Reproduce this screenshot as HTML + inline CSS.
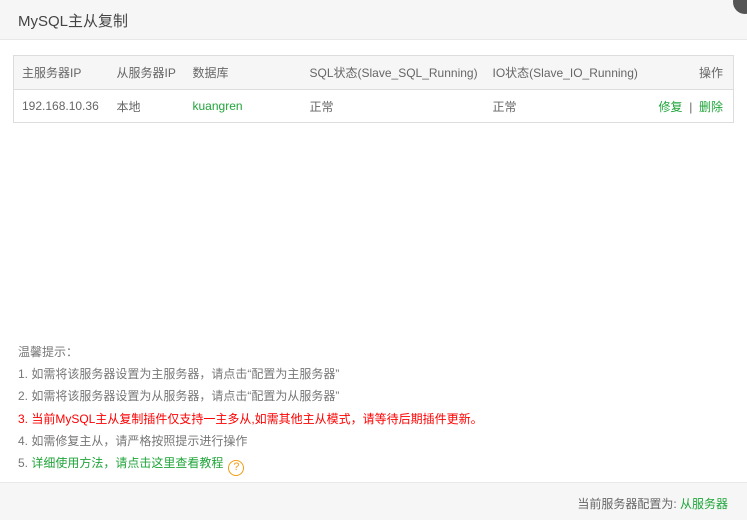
<!DOCTYPE html>
<html><head><meta charset="utf-8"><style>
*{margin:0;padding:0;box-sizing:border-box}
body{width:747px;height:520px;background:#fff;font-family:"Liberation Sans","Noto Sans CJK SC",sans-serif;font-size:12px;color:#555;position:relative;overflow:hidden}
.hd{position:absolute;left:0;top:0;width:747px;height:40px;background:#f6f6f6;border-bottom:1px solid #e8e8e8}
.hd span{position:absolute;left:18px;top:10px;font-size:15px;color:#444}
.close{position:absolute;left:733px;top:-10px;width:24px;height:24px;border-radius:50%;background:#555}
table{position:absolute;left:13px;top:55px;width:721px;border-collapse:collapse;border:1px solid #ddd}
th{height:34px;background:#f6f6f6;font-weight:normal;text-align:left;color:#666;border-bottom:1px solid #ddd;white-space:nowrap}
td{height:33px;color:#666;white-space:nowrap}
th,td{padding:0 0 0 8px}
.g{color:#20a53a}
.tips{position:absolute;left:18px;top:341px;line-height:22.2px;color:#777;white-space:nowrap}
.r{color:#f00}
.q{display:inline-block;width:16px;height:16px;border:1.5px solid #f39c12;border-radius:50%;color:#f39c12;font-size:11px;text-align:center;line-height:13px;margin-left:5px;vertical-align:-3px}
.ft{position:absolute;left:0;top:482px;width:747px;height:38px;background:#f6f6f6;border-top:1px solid #e8e8e8}
.ft span.t{position:absolute;right:19px;top:12px;color:#666;white-space:nowrap}
</style></head><body>
<div class="hd"><span>MySQL主从复制</span></div>
<div class="close"></div>
<table>
<tr><th style="width:95px">主服务器IP</th><th style="width:76px">从服务器IP</th><th style="width:117px">数据库</th><th style="width:183px">SQL状态(Slave_SQL_Running)</th><th>IO状态(Slave_IO_Running)</th><th style="text-align:right;padding-right:10px">操作</th></tr>
<tr><td>192.168.10.36</td><td>本地</td><td class="g">kuangren</td><td>正常</td><td>正常</td><td style="text-align:right;padding-right:10px"><span class="g">修复</span> &nbsp;|&nbsp; <span class="g">删除</span></td></tr>
</table>
<div class="tips">
温馨提示：<br>
1. 如需将该服务器设置为主服务器，请点击“配置为主服务器”<br>
2. 如需将该服务器设置为从服务器，请点击“配置为从服务器”<br>
<span class="r">3. 当前MySQL主从复制插件仅支持一主多从,如需其他主从模式，请等待后期插件更新。</span><br>
4. 如需修复主从，请严格按照提示进行操作<br>
5. <span class="g">详细使用方法，请点击这里查看教程</span><span class="q">?</span>
</div>
<div class="ft"><span class="t">当前服务器配置为: <span class="g">从服务器</span></span></div>
</body></html>
